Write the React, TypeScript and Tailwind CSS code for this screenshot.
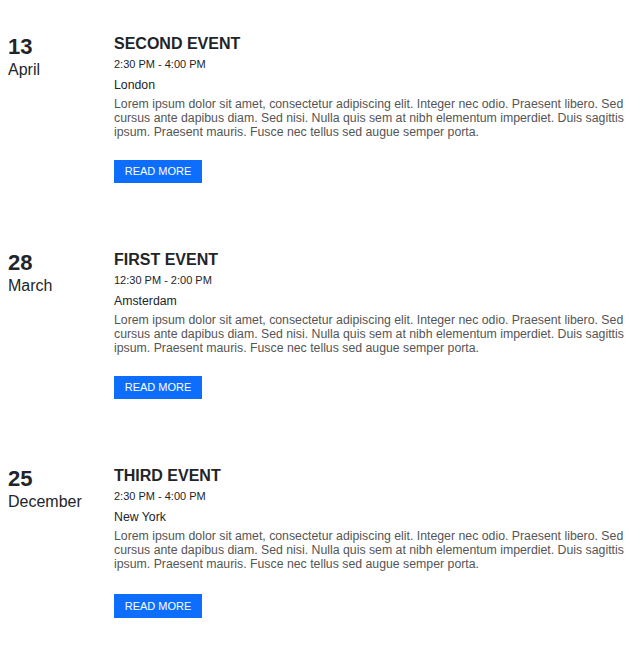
import React from "react";

const events = [
  { day: "13", month: "April", title: "SECOND EVENT", time: "2:30 PM - 4:00 PM", place: "London", btn: "mt-[21px] h-[23px]" },
  { day: "28", month: "March", title: "FIRST EVENT", time: "12:30 PM - 2:00 PM", place: "Amsterdam", btn: "mt-[21px] h-[23px]" },
  { day: "25", month: "December", title: "THIRD EVENT", time: "2:30 PM - 4:00 PM", place: "New York", btn: "mt-[23px] h-[24px]" },
];

const lorem =
  "Lorem ipsum dolor sit amet, consectetur adipiscing elit. Integer nec odio. Praesent libero. Sed cursus ante dapibus diam. Sed nisi. Nulla quis sem at nibh elementum imperdiet. Duis sagittis ipsum. Praesent mauris. Fusce nec tellus sed augue semper porta.";

export default function App() {
  return (
    <div className="bg-white min-h-[668px] pt-[33px] text-[#212529]" style={{ fontFamily: '"Liberation Sans", Arial, sans-serif' }}>
      <div className="flex flex-col gap-[66px]">
        {events.map((e) => (
          <div key={e.title} className="flex">
            <div className="w-[114px] shrink-0 pl-[8px]">
              <div className="text-[22px] leading-[27px] font-bold">{e.day}</div>
              <div className="text-[16px] leading-[20px]">{e.month}</div>
            </div>
            <div className="w-[518px] pt-[1px]">
              <div className="text-[16px] leading-[20px] font-bold">{e.title}</div>
              <div className="text-[11px] leading-[14px] mt-[3px]">{e.time}</div>
              <div className="text-[12.3px] leading-[16px] mt-[6px]">{e.place}</div>
              <p className="text-[12.3px] leading-[14px] mt-[4px] text-[#555]">{lorem}</p>
              <button className={`${e.btn} w-[88px] bg-[#0d6efd] text-white text-[11px] uppercase flex items-center justify-center`}>
                Read More
              </button>
            </div>
          </div>
        ))}
      </div>
    </div>
  );
}
